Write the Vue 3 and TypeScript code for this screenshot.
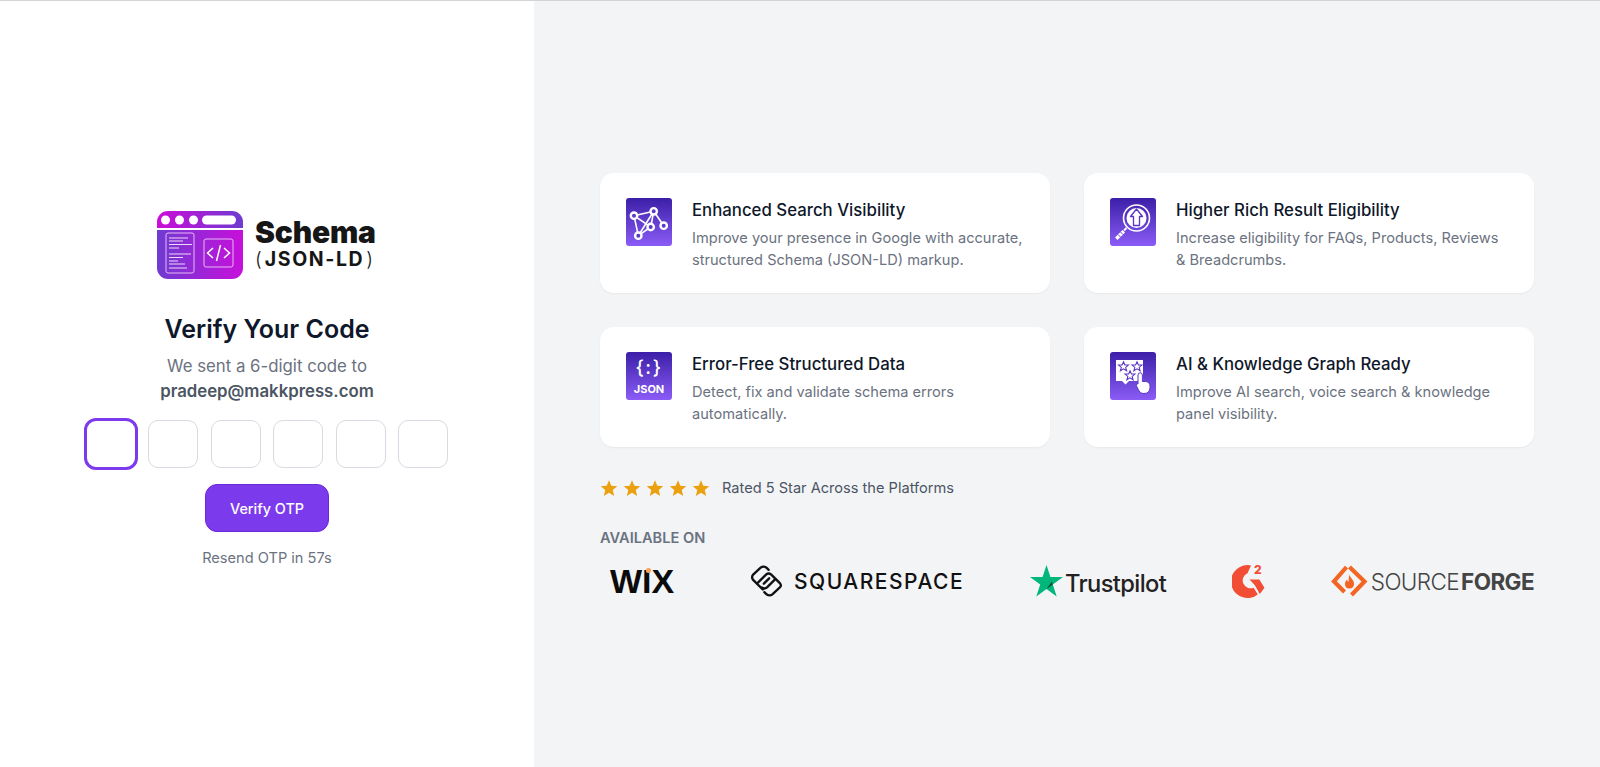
<script setup lang="ts">
import { ref } from 'vue';

const digits = ref(['', '', '', '', '', '']);
const stars = [1, 2, 3, 4, 5];

const features = [
  { icon: 'graph', title: 'Enhanced Search Visibility', text: 'Improve your presence in Google with accurate, structured Schema (JSON-LD) markup.' },
  { icon: 'lens', title: 'Higher Rich Result Eligibility', text: 'Increase eligibility for FAQs, Products, Reviews & Breadcrumbs.' },
  { icon: 'json', title: 'Error-Free Structured Data', text: 'Detect, fix and validate schema errors automatically.' },
  { icon: 'rate', title: 'AI & Knowledge Graph Ready', text: 'Improve AI search, voice search & knowledge panel visibility.' },
];

const nodes = [[8, 17.7], [27.7, 13.3], [37.7, 27.7], [24.7, 29], [12.3, 37.7]];
const edges = [[0, 1], [1, 2], [1, 3], [0, 3], [0, 4], [3, 4], [1, 4]];
const star = 'M0-5 1.5-1.6 5.2-1.5 2.3.9 3.3 4.5 0 2.5-3.3 4.5-2.3.9-5.2-1.5-1.5-1.6Z';
</script>

<template>
  <div class="page">
    <section class="left">
      <div class="brand">
        <svg class="brand-icon" width="86" height="68" viewBox="0 0 86 68">
          <defs>
            <linearGradient id="bar" x1="0" x2="1" y1="0" y2="0">
              <stop offset="0" stop-color="#cc0cd8" />
              <stop offset="1" stop-color="#6f3bd1" />
            </linearGradient>
            <linearGradient id="body" x1="0" x2="1" y1="0" y2="0">
              <stop offset="0" stop-color="#6f3bd1" />
              <stop offset="1" stop-color="#c80fdb" />
            </linearGradient>
          </defs>
          <path d="M0 17V11A11 11 0 0 1 11 0H75A11 11 0 0 1 86 11V17Z" fill="url(#bar)" />
          <path d="M0 19H86V57A11 11 0 0 1 75 68H11A11 11 0 0 1 0 57Z" fill="url(#body)" />
          <circle cx="8.500" cy="9" r="4.500" fill="#fff" />
          <circle cx="22.500" cy="9" r="4.500" fill="#fff" />
          <circle cx="36.500" cy="9" r="4.500" fill="#fff" />
          <rect x="45" y="4.500" width="34" height="9" rx="4.500" fill="#fff" />
          <rect x="9" y="22" width="28" height="40" rx="2" fill="none" stroke="#e6b8f5" />
          <path d="M12 27H31M12 30H26M12 33.500H35M12 37H22M12 43H34M12 46.500H26M12 50H21M12 53H28M12 57H30" stroke="#f0d8fa" stroke-width="1.100" />
          <rect x="47" y="28" width="29" height="28" rx="2" fill="none" stroke="#e6b8f5" />
          <path d="M56 37 50.500 42 56 47M67 37 72.500 42 67 47M63.500 34 59.500 50" fill="none" stroke="#fff" stroke-width="1.500" />
        </svg>
        <div class="brand-name">
          <span class="brand-title">Schema</span>
          <span class="brand-sub"><span class="paren">(</span>JSON-LD<span class="paren">)</span></span>
        </div>
      </div>

      <h1>Verify Your Code</h1>
      <p class="sent">We sent a 6-digit code to</p>
      <p class="email">pradeep@makkpress.com</p>

      <div class="otp">
        <input
          v-for="(digit, i) in digits"
          :key="i"
          v-model="digits[i]"
          class="otp-box"
          :class="{ active: i === 0 }"
          maxlength="1"
        />
      </div>

      <button class="verify">Verify OTP</button>
      <p class="resend">Resend OTP in 57s</p>
    </section>

    <section class="right">
      <div class="cards">
        <div v-for="item in features" :key="item.title" class="card">
          <div class="card-icon">
            <svg v-if="item.icon === 'graph'" width="46" height="48" viewBox="0 0 46 48">
              <line
                v-for="(e, i) in edges"
                :key="i"
                :x1="nodes[e[0]][0]"
                :y1="nodes[e[0]][1]"
                :x2="nodes[e[1]][0]"
                :y2="nodes[e[1]][1]"
                stroke="#fff"
                stroke-width="1.600"
              />
              <circle
                v-for="(n, i) in nodes"
                :key="i"
                :cx="n[0]"
                :cy="n[1]"
                r="3.200"
                fill="#5b3ac8"
                stroke="#fff"
                stroke-width="2.400"
              />
            </svg>
            <svg v-else-if="item.icon === 'lens'" width="46" height="48" viewBox="0 0 46 48">
              <circle cx="26.500" cy="20" r="13" fill="none" stroke="#fff" stroke-width="1.600" />
              <circle cx="26.500" cy="20" r="10" fill="#fff" />
              <path d="M26.500 11 32.500 18.500H29.500V27.500H23.500V18.500H20.500Z" fill="#fff" stroke="#5b34c4" stroke-width="1.300" stroke-linejoin="round" />
              <path d="M16.500 30 14 32.500" stroke="#fff" stroke-width="2" />
              <path d="M12.500 32 15 34.500 7.500 42 5 39.500Z" fill="#fff" />
              <path d="M8 36.500 10.500 39M10.500 34 13 36.500" stroke="#6a45d8" stroke-width="1" />
            </svg>
            <div v-else-if="item.icon === 'json'" class="json-icon">
              <span class="json-brace">{:}</span>
              <span class="json-word">JSON</span>
            </div>
            <svg v-else width="46" height="48" viewBox="0 0 46 48">
              <path d="M6 8H33V29H19L15.500 32.500 12 29H6Z" fill="#fff" />
              <path :d="star" transform="translate(13.500 14.500) scale(.95)" fill="none" stroke="#5b34c4" stroke-width="1.100" />
              <path :d="star" transform="translate(27 14.500) scale(.95)" fill="none" stroke="#5b34c4" stroke-width="1.100" />
              <path :d="star" transform="translate(20 23.500) scale(.95)" fill="none" stroke="#5b34c4" stroke-width="1.100" />
              <path d="M28 23A2.200 2.200 0 0 1 32.400 23V29.500H35.500Q40 30 40 34V36Q39.500 41.500 34 41.500H33Q30 41.500 28.500 38L26 33Q27 31 28 32Z" fill="#fff" stroke="#5b34c4" stroke-width="1" />
            </svg>
          </div>
          <div class="card-body">
            <h3>{{ item.title }}</h3>
            <p>{{ item.text }}</p>
          </div>
        </div>
      </div>

      <div class="rating">
        <div class="stars">
          <svg v-for="s in stars" :key="s" width="18" height="18" viewBox="0 0 24 24">
            <path d="M12 1.500 15.100 8.900 23 9.500 17 14.700 18.900 22.500 12 18.300 5.100 22.500 7 14.700 1 9.500 8.900 8.900Z" fill="#eba010" />
          </svg>
        </div>
        <span>Rated 5 Star Across the Platforms</span>
      </div>

      <div class="available">AVAILABLE ON</div>

      <div class="logos">
        <div class="wix">WIX<i></i></div>
        <div class="squarespace">
          <svg width="37" height="32" viewBox="2 1 31 30">
            <g fill="none" stroke="#111" stroke-width="2.200" stroke-linecap="round">
              <path d="M14 24 5 15Q3 12.500 5 10L12 3.500Q14.500 1.500 17.500 3.500L19.500 5.500" />
              <path d="M9.500 17.500 17 10Q19.500 8 22 10L30 18Q32 20.500 30 22L23 28.500Q20.500 30.500 17.500 28.500L15.500 26.500" />
              <path d="M15 18.500 20 13.500" />
              <path d="M25.500 14.500 18 22Q15.500 24 13 22" />
            </g>
          </svg>
          <span>SQUARESPACE</span>
        </div>
        <div class="trustpilot">
          <svg width="33" height="32" viewBox="0 0 32 31">
            <path d="M16 0 19.800 11.600H32L22.100 18.800 25.900 30.500 16 23.300 6.100 30.500 9.900 18.800 0 11.600H12.200Z" fill="#00b67a" />
            <path d="M22.100 18.800 21.200 16 16 23.300Z" fill="#005128" />
          </svg>
          <span>Trustpilot</span>
        </div>
        <div class="g2">
          <svg width="33" height="34" viewBox="0 0 32 33">
            <path d="M15 1A16 16 0 1 0 25 29.500L21 23A7.500 7.500 0 1 1 15 9L18.500 1.500Q17 1 15 1Z" fill="#f24e35" />
            <path d="M17 15H26.500L31.500 23 27 29 22 20.500Z" fill="#f24e35" />
          </svg>
          <span>2</span>
        </div>
        <div class="sourceforge">
          <svg width="37" height="33" viewBox="0 0 36 33">
            <g fill="none" stroke="#f26522" stroke-width="4.200">
              <path d="M15 2 2.500 16.500 13 27" />
              <path d="M18 2 33 16.500 20 30" />
            </g>
            <path d="M18 9.500C18.500 13 23 15 22.500 19.500Q22 23.500 18 23.500 13.500 23.500 13.500 19 13.500 16.500 15.500 14.500 16 16.500 17 17 17 13 18 9.500Z" fill="#f26522" />
          </svg>
          <span class="light">SOURCE</span><span class="bold">FORGE</span>
        </div>
      </div>
    </section>
  </div>
</template>

<style>
html,
body {
  margin: 0;
  background: #fff;
}
</style>

<style scoped>
* {
  box-sizing: border-box;
}

.page {
  display: flex;
  height: 767px;
  overflow: hidden;
  border-top: 1px solid #d4d4d6;
  font-family: Inter, "Liberation Sans", sans-serif;
  color: #111827;
}

.left {
  width: 534px;
  flex-shrink: 0;
  display: flex;
  flex-direction: column;
  align-items: center;
  padding-top: 210px;
  background: #fff;
}

.brand {
  display: flex;
  align-items: center;
  gap: 12px;
  height: 68px;
}

.brand-name {
  display: flex;
  flex-direction: column;
  width: 122px;
  margin-top: -2px;
  color: #161616;
}

.brand-title {
  font-size: 30px;
  font-weight: 900;
  line-height: 30px;
  letter-spacing: -0.2px;
}

.brand-sub {
  font-size: 19.500px;
  font-weight: 700;
  line-height: 25px;
  letter-spacing: 1.600px;
  white-space: nowrap;
}

.paren {
  font-weight: 300;
  letter-spacing: 0;
  margin: 0 3px 0 0;
}

.paren:last-child {
  margin: 0 0 0 2px;
}

h1 {
  margin: 34px 0 0;
  font-size: 25px;
  line-height: 32px;
  font-weight: 600;
  color: #0f172a;
}

.sent,
.email {
  margin: 0;
  font-size: 16.800px;
  line-height: 25px;
}

.sent {
  margin-top: 9px;
  color: #6b7280;
}

.email {
  font-weight: 600;
  color: #4b5563;
}

.otp {
  display: flex;
  gap: 12.600px;
  margin-top: 16px;
}

.otp-box {
  width: 50px;
  height: 48px;
  padding: 0;
  border: 1px solid #d9dae2;
  border-radius: 10px;
  background: #fff;
  outline: none;
}

.otp-box.active {
  border: 3px solid #7c3aed;
  width: 54px;
  height: 52px;
  margin: -2px -2px;
  border-radius: 12px;
}

.verify {
  width: 124px;
  height: 48px;
  margin-top: 16px;
  border: 1px solid #6d28d9;
  border-radius: 12px;
  background: #7c3aed;
  color: #fff;
  font-family: inherit;
  font-size: 14.400px;
  font-weight: 500;
}

.resend {
  margin: 16px 0 0;
  font-size: 14.600px;
  line-height: 20px;
  color: #6b7280;
}

.right {
  flex: 1;
  display: flex;
  flex-direction: column;
  justify-content: center;
  padding: 6px 66px 0;
  background: #f3f4f6;
}

.cards {
  display: grid;
  grid-template-columns: 1fr 1fr;
  gap: 34px;
}

.card {
  display: flex;
  align-items: flex-start;
  gap: 20px;
  height: 120px;
  padding: 25px 26px;
  border-radius: 14px;
  background: #fff;
  box-shadow: 0 1px 2px rgba(0, 0, 0, 0.05);
}

.card-icon {
  width: 46px;
  height: 48px;
  flex-shrink: 0;
  border-radius: 3px;
  background: linear-gradient(180deg, #3b1fa8, #8b5cf6);
}

.card-icon svg {
  display: block;
}

.json-icon {
  display: flex;
  flex-direction: column;
  align-items: center;
  color: #fff;
}

.json-brace {
  font-size: 19px;
  font-weight: 500;
  line-height: 24px;
  letter-spacing: 1.500px;
  margin-top: 4px;
}

.json-word {
  font-size: 11px;
  font-weight: 700;
  line-height: 14px;
  margin-top: 2px;
}

h3 {
  margin: 0;
  font-size: 16.800px;
  line-height: 24px;
  font-weight: 500;
  color: #0f172a;
}

.card-body p {
  margin: 6px 0 0;
  font-size: 14.600px;
  line-height: 21.500px;
  color: #6b7280;
}

.rating {
  display: flex;
  align-items: center;
  gap: 12px;
  margin-top: 31px;
  font-size: 14.600px;
  line-height: 20px;
  color: #4b5563;
}

.stars {
  display: flex;
  gap: 5px;
}

.stars svg {
  display: block;
}

.available {
  margin-top: 30px;
  font-size: 14.600px;
  font-weight: 600;
  line-height: 20px;
  color: #6b7280;
}

.logos {
  display: flex;
  align-items: center;
  justify-content: space-between;
  height: 40px;
  margin-top: 13px;
}

.wix {
  position: relative;
  margin-left: 10px;
  margin-right: 8px;
  font-family: "Liberation Sans", sans-serif;
  font-size: 34px;
  font-weight: 700;
  color: #0b0b0b;
}

.wix i {
  position: absolute;
  left: 36px;
  top: 6px;
  width: 5px;
  height: 5px;
  background: #f7a35c;
  border-radius: 2px;
}

.squarespace {
  display: flex;
  align-items: center;
  gap: 9px;
  font-size: 21px;
  font-weight: 500;
  letter-spacing: 1.500px;
  color: #111;
}

.trustpilot {
  display: flex;
  align-items: flex-end;
  gap: 2px;
  font-size: 23.700px;
  font-weight: 500;
  letter-spacing: -0.6px;
  color: #222;
}

.trustpilot span {
  line-height: 26px;
}

.g2 {
  position: relative;
  width: 33px;
  height: 34px;
}

.g2 svg {
  display: block;
}

.g2 span {
  position: absolute;
  left: 22px;
  top: -2px;
  font-size: 12px;
  font-weight: 800;
  color: #f24e35;
}

.sourceforge {
  display: flex;
  align-items: center;
  font-size: 22.500px;
  letter-spacing: -0.6px;
  color: #444;
}

.sourceforge svg {
  margin-right: 3px;
}

.sourceforge .light {
  font-weight: 300;
}

.sourceforge .bold {
  margin-left: 2px;
  font-weight: 700;
}
</style>
